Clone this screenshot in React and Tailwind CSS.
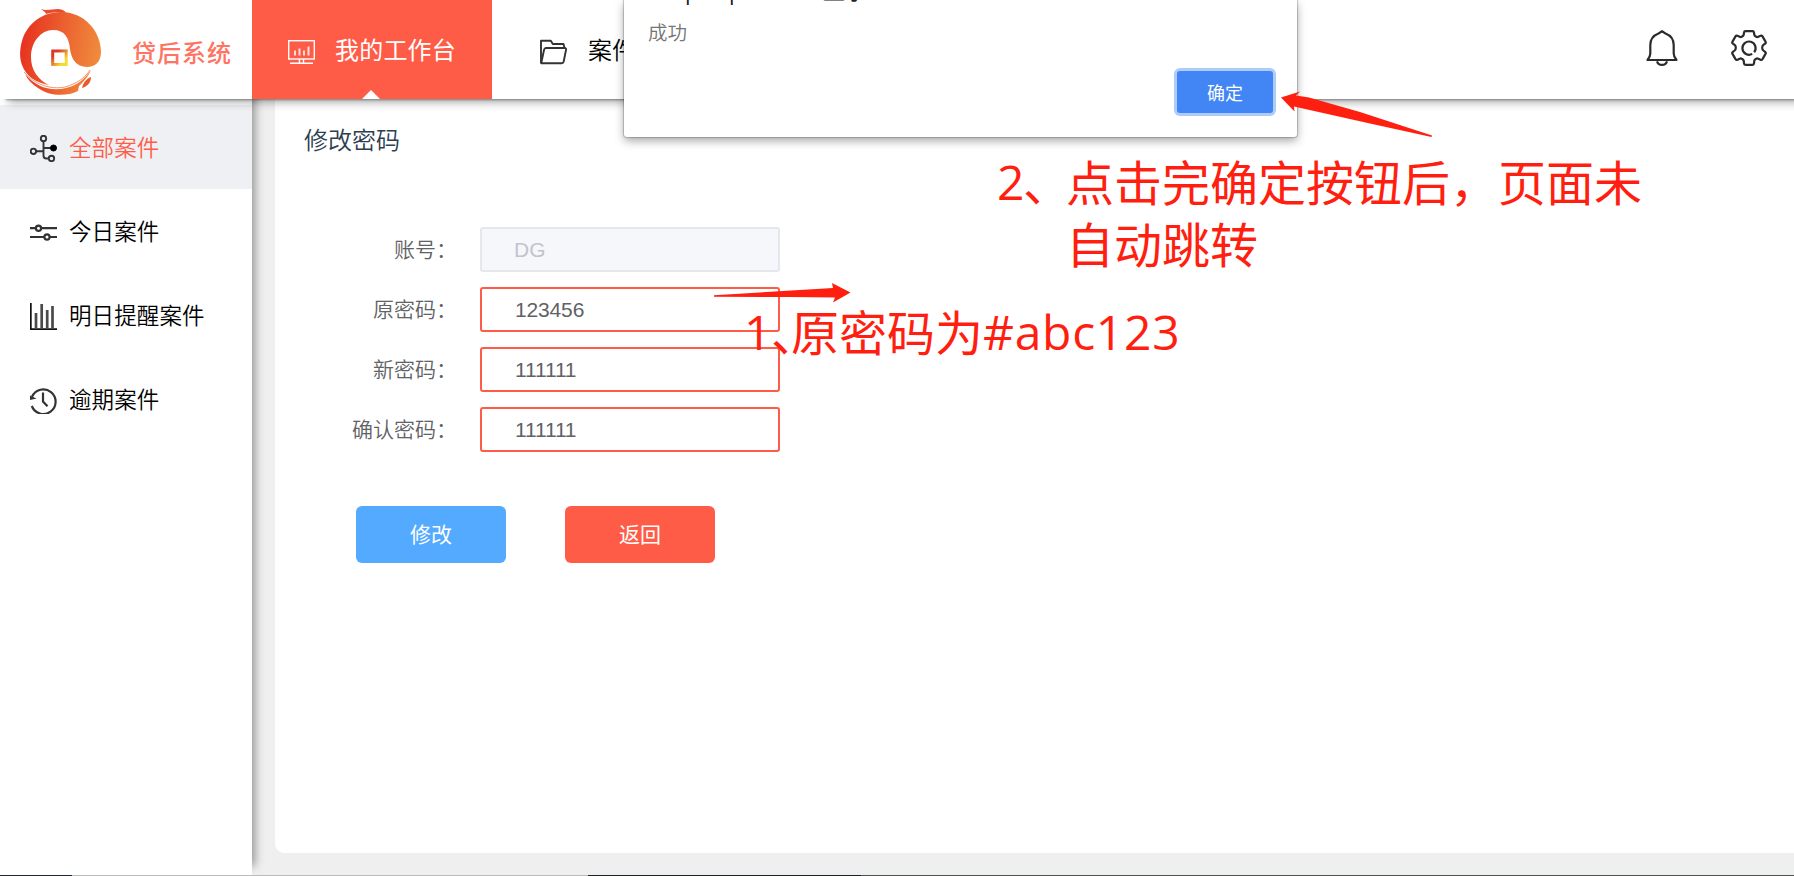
const INK = '#333333';

function Logo() {
  return (
    <svg className="h-[87px] w-[82px] shrink-0" viewBox="20 9 82 87">
      <defs>
        <linearGradient id="ring" x1="0" y1="0.4" x2="1" y2="0.55">
          <stop offset="0" stopColor="#e7301f" />
          <stop offset="0.55" stopColor="#ec6531" />
          <stop offset="1" stopColor="#f08c3c" />
        </linearGradient>
        <linearGradient id="coin" x1="0" y1="0" x2="1" y2="1">
          <stop offset="0.2" stopColor="#dd3a25" />
          <stop offset="0.8" stopColor="#f5dc35" />
        </linearGradient>
      </defs>
      <path d="M41 9 C46 11 52 9 58 9 C63 9.500 65 11 66 13 C59 11.500 52 12 46 14 C46 12 43 11 41 9Z" fill="#ea4a2a" />
      <path d="M53 30 C41 30 31 42 31 57 C31 70 38 80 49 85 C36 83 26 76 22 65 C19 57 20 48 22 41 C27 23 43 12 61 12 C84 12 101 31 101 52 C101 62 95 67 87 67 C76 67 71 58 70 49 C69 38 65 30 53 30Z" fill="url(#ring)" />
      <path d="M25 74 C36 87 51 92 66 88 C76 86 84 80 91 70 C88 77 84 81 79 86 L78 91 C66 97 49 96 38 88 C32 84 28 80 25 74Z" fill="url(#ring)" />
      <path d="M24 72 C34 84 50 90 65 87 C76 84 85 78 90 70" fill="none" stroke="#ee7a4a" strokeWidth="0.8" />
      <path d="M91 77 C91 82 88 86 82 88 C83 83 86 79 91 77Z" fill="#e9592d" />
      <rect x="52.700" y="51" width="13.500" height="13.500" fill="#fff" stroke="url(#coin)" strokeWidth="3" />
    </svg>
  );
}

function MonitorIcon() {
  return (
    <svg className="h-[27px] w-[27px]" viewBox="0 0 27 27" fill="none" stroke="#fff" strokeWidth="1.400">
      <rect x="0.700" y="2.700" width="25.600" height="18.300" />
      <path d="M7 17.500v-5M11.500 17.500v-7M16 17.500v-5M20.500 17.500v-9" strokeWidth="2" opacity="0.8" />
      <path d="M11.500 21v4M15.500 21v4M2 25.300h23" />
    </svg>
  );
}

function FolderIcon() {
  return (
    <svg className="h-[27px] w-[27px]" viewBox="0 0 27 27" fill="none" stroke={INK} strokeWidth="1.900" strokeLinejoin="round">
      <path d="M1 25V2.800h9.800l2 3.200h10.700l1 4" />
      <path d="M1.200 25.200 4 12c.3-1.300.8-2 2-2h18.500c1.300 0 1.800.6 1.500 2l-2.300 11.500c-.3 1.200-.8 1.700-2 1.700z" />
    </svg>
  );
}

function BellIcon() {
  return (
    <svg className="h-[36px] w-[32px]" viewBox="0 0 32 36" fill="none" stroke="#2b2b2b" strokeWidth="2.200" strokeLinejoin="round">
      <path d="M16 1.200C14.500 2 13.800 3 12.500 3.500 7 5.600 4.300 9.500 4.300 15v8.500c0 2.300-.9 4.300-2.800 6.500h29c-1.900-2.200-2.800-4.200-2.800-6.500V15c0-5.500-2.700-9.400-8.200-11.500C18.200 3 17.500 2 16 1.200z" />
      <path d="M11 31.300c.8 2.300 2.600 3.600 5 3.600s4.200-1.300 5-3.600" />
    </svg>
  );
}

function GearIcon() {
  return (
    <svg className="h-[36px] w-[36px]" viewBox="0 0 36 36" fill="none" stroke="#2b2b2b" strokeWidth="2.200" strokeLinejoin="round">
      <path d="M14.500 1.200h7c1 0 1.400.5 1.500 1.400l.3 2.200c.2 1 .7 1.400 1.500 1.800 1 .5 1.700.6 2.500.2l2.200-1c.8-.4 1.500-.2 2 .6l3 5.200c.5.800.4 1.500-.4 2l-1.700 1.300c-1.600 1.300-1.600 4.300 0 5.600l1.700 1.300c.8.600.9 1.300.4 2.100l-3 5.200c-.5.800-1.200 1-2 .6l-2.200-1c-.8-.4-1.500-.3-2.500.2-.8.400-1.300.8-1.500 1.800l-.3 2.700c-.1.900-.5 1.400-1.500 1.400h-7c-1 0-1.400-.5-1.500-1.400l-.3-2.700c-.2-1-.7-1.400-1.500-1.800-1-.5-1.700-.6-2.500-.2l-2.200 1c-.8.4-1.500.2-2-.6l-3-5.200c-.5-.8-.4-1.500.4-2.100l1.700-1.300c1.600-1.300 1.600-4.300 0-5.600l-1.700-1.300c-.8-.5-.9-1.200-.4-2l3-5.200c.5-.8 1.200-1 2-.6l2.200 1c.8.400 1.500.3 2.500-.2.800-.4 1.300-.8 1.500-1.800l.3-2.200c.1-.9.5-1.400 1.500-1.400z" />
      <path d="M23.200 22.200a6.600 6.600 0 1 0-2 1.700" />
    </svg>
  );
}

function NodesIcon() {
  return (
    <svg className="h-[27px] w-[27px]" viewBox="0 0 27 27" fill="none" stroke={INK} strokeWidth="1.900">
      <circle cx="13.500" cy="3.400" r="2.700" />
      <circle cx="3.400" cy="16.300" r="2.700" />
      <circle cx="21.500" cy="23.500" r="2.700" />
      <path d="M13.500 6v14.500c0 2 .8 3 2.800 3h2.500M6 16.300h7.500M13.500 13h8" />
      <circle cx="23.500" cy="13" r="3" fill="#000" stroke="#000" strokeWidth="1" />
    </svg>
  );
}

function SlidersIcon() {
  return (
    <svg className="h-[27px] w-[27px]" viewBox="0 0 27 27" fill="none" stroke={INK} strokeWidth="2.200">
      <path d="M0 9.200h5.800M11.200 9.200H27M0 18h14.300M19.700 18H27" />
      <circle cx="8.500" cy="9.200" r="2.600" />
      <circle cx="17" cy="18" r="2.600" />
    </svg>
  );
}

function BarsIcon() {
  return (
    <svg className="h-[27px] w-[27px]" viewBox="0 0 27 27" fill="none" stroke={INK}>
      <path d="M.8 0v26.200H27" strokeWidth="1.800" stroke="#111" />
      <path d="M6 25V10M11.700 25V1M17.200 25V7M22.500 25V3" strokeWidth="2.700" stroke="#4a4a4a" />
    </svg>
  );
}

function HistoryIcon() {
  return (
    <svg className="h-[27px] w-[27px]" viewBox="0 0 27 27" fill="none" stroke={INK} strokeWidth="2.200">
      <path d="M2 9.800A12.300 12.300 0 1 1 1.800 19" />
      <path d="M0 13V8.500L2 9.500l4.500 2z" fill={INK} stroke="none" />
      <path d="M13 5.500v9l4.500 4.700" />
    </svg>
  );
}

const menu = [
  { label: '全部案件', Icon: NodesIcon, active: true },
  { label: '今日案件', Icon: SlidersIcon },
  { label: '明日提醒案件', Icon: BarsIcon },
  { label: '逾期案件', Icon: HistoryIcon },
];

const fields = [
  { label: '账号：', value: 'DG', disabled: true },
  { label: '原密码：', value: '123456' },
  { label: '新密码：', value: '111111' },
  { label: '确认密码：', value: '111111' },
];

function Header() {
  return (
    <header className="relative z-20 flex h-[99px] shrink-0 bg-white shadow-[6px_1px_2px_rgba(60,70,65,0.5),8px_3px_9px_rgba(0,0,0,0.35)]">
      <div className="flex w-[252px] items-center pl-5 pt-[5px]">
        <Logo />
        <span className="ml-[30px] text-[24px] font-medium leading-none tracking-[1px] text-[#ff7362]">贷后系统</span>
      </div>
      <nav className="flex">
        <a className="relative flex w-60 items-center bg-[#ff5c48] pl-9 text-[24px] font-normal text-white">
          <span className="pt-1"><MonitorIcon /></span>
          <span className="-mt-0.5 ml-5 tracking-[0.2px]">我的工作台</span>
          <svg className="absolute bottom-0 left-[110px] h-[9px] w-[18px]" viewBox="0 0 18 9">
            <path d="M0 9 9 0l9 9z" fill="#fff" />
          </svg>
        </a>
        <a className="flex items-center pl-12 text-[24px] text-black">
          <span className="pt-1"><FolderIcon /></span>
          <span className="-mt-0.5 ml-[21px]">案件</span>
        </a>
      </nav>
      <div className="ml-auto flex items-center gap-[53px] pb-[3px] pr-[27px]">
        <BellIcon />
        <GearIcon />
      </div>
    </header>
  );
}

function Sidebar() {
  return (
    <aside className="relative z-10 w-[252px] shrink-0 bg-white pt-1.5 shadow-[3px_-9px_9px_rgba(0,0,0,0.38)]">
      {menu.map(({ label, Icon, active }) => (
        <a
          key={label}
          className={
            active
              ? 'flex h-[84px] items-center bg-[#eff0f4] pl-[30px] text-[22.5px] text-[#ff5c48]'
              : 'flex h-[84px] items-center pl-[30px] text-[22.5px] text-black'
          }
        >
          <span className="pt-0.5"><Icon /></span>
          <span className="ml-3 tracking-[0.1px]">{label}</span>
        </a>
      ))}
    </aside>
  );
}

function PasswordForm() {
  return (
    <main className="ml-[23px] h-[754px] flex-1 self-start rounded-bl-[9px] bg-white pl-[29px]">
      <h1 className="pt-[22px] text-[24px] leading-9 text-[#2c3e50]">修改密码</h1>
      <div className="mt-[70px] flex flex-col gap-[15px]">
        {fields.map((f) => (
          <div key={f.label} className="flex h-[45px] items-center">
            <label className="-mt-0.5 w-[153px] text-right text-[21px] text-[#606266]">{f.label}</label>
            <div
              className={
                f.disabled
                  ? 'ml-[23px] flex h-[45px] w-[300px] items-center rounded-[3px] border-2 border-[#e4e7ed] bg-[#f5f7fa] pl-8 font-["Liberation_Sans",sans-serif] text-[21px] text-[#c0c4cc]'
                  : 'ml-[23px] flex h-[45px] w-[300px] items-center rounded-[3px] border-2 border-[#ff5c48] bg-white pl-[33px] font-["Liberation_Sans",sans-serif] text-[21px] tracking-[-0.15px] text-[#606266]'
              }
            >
              {f.value}
            </div>
          </div>
        ))}
      </div>
      <div className="ml-[52px] mt-[54px] flex gap-[59px] text-[21px] font-normal text-white">
        <button className="h-[57px] w-[150px] rounded-md bg-[#54aaff] pb-0.5">修改</button>
        <button className="h-[57px] w-[150px] rounded-md bg-[#ff5c48] pb-0.5">返回</button>
      </div>
    </main>
  );
}

function AlertDialog() {
  return (
    <div className="absolute left-[624px] top-0 z-30 h-[137px] w-[673px] rounded-b-[3px] bg-white shadow-[0_0_1px_1px_rgba(0,0,0,0.2),0_4px_10px_rgba(0,0,0,0.34)]">
      <div className="h-[5px] overflow-hidden">
        <div className="-mt-[23px] flex whitespace-pre pl-[61px] font-['Open_Sans','Noto_Sans_CJK_SC',sans-serif] text-[22px] font-normal leading-7 text-[#202124]">
          <span className="w-11">p</span>
          <span className="w-[94px]">p</span>
          <span className="-mt-px">显示</span>
        </div>
      </div>
      <p className="pl-6 pt-[13px] text-[19.5px] leading-7 text-[#757575]">成功</p>
      <button className="ml-[553px] mt-[25px] h-[42px] w-24 rounded-[3px] bg-[#4285f4] text-[18px] font-normal text-white ring-3 ring-[#aecbfa]">确定</button>
    </div>
  );
}

function Annotations() {
  return (
    <div className="absolute inset-0 z-40 text-[48px] font-normal leading-[62px] text-[#ff1f10]">
      <svg className="absolute left-0 top-0 h-[876px] w-[1794px]" viewBox="0 0 1794 876" fill="#ff1f10">
        <path d="M714 295.300 833 288 832 283 850.500 292.500 833 302.500 835 297.500 790 297 714 296.800Z" />
        <path d="M1281 97.500 1300 91.500 1296 95.500 1309 97.500 1360 112 1432 135.500 1431.500 137 1370 123.500 1294 106.500 1294.500 111.500Z" />
      </svg>
      <div className="absolute left-[744px] top-[299px] flex whitespace-nowrap">
        <span className="w-[27px] pt-0.5 font-['Open_Sans',sans-serif]">1</span>
        <span className="w-5">、</span>
        <span>原密码为</span>
        <span className="pt-0.5 font-['Open_Sans',sans-serif] tracking-[0.7px]">#abc123</span>
      </div>
      <div className="absolute left-[997px] top-[149px] flex whitespace-nowrap">
        <span className="w-[26px] pt-0.5 font-['Open_Sans',sans-serif]">2</span>
        <span className="w-[43px]">、</span>
        <span>
          点击完确定按钮后，页面未
          <br />
          自动跳转
        </span>
      </div>
    </div>
  );
}

export default function App() {
  return (
    <div className="relative flex h-[876px] w-[1794px] flex-col overflow-hidden bg-[#efefef] font-['Noto_Sans_CJK_SC',sans-serif] font-[350]">
      <Header />
      <div className="flex flex-1">
        <Sidebar />
        <PasswordForm />
      </div>
      <footer className="relative z-10 flex h-px">
        <div className="w-[72px] bg-[#1f2630]" />
        <div className="w-[516px] bg-[#bbbbbb]" />
        <div className="w-[273px] bg-[#1c2224]" />
        <div className="flex-1 bg-[#505354]" />
      </footer>
      <AlertDialog />
      <Annotations />
    </div>
  );
}
